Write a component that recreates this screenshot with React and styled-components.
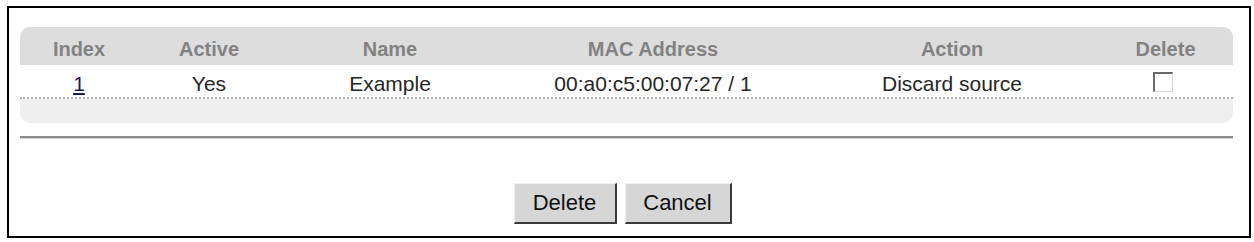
import React from "react";
import styled, { createGlobalStyle } from "styled-components";

const Global = createGlobalStyle`
  html, body { margin: 0; padding: 0; background: #ffffff; }
  body { font-family: "Liberation Sans", Arial, sans-serif; }
`;

const Frame = styled.div`
  box-sizing: border-box;
  margin: 6px 0 0 7px;
  width: 1244px;
  height: 232px;
  border: 2px solid #000;
  padding: 19px 16px 0 11px;
  display: flex;
  flex-direction: column;
`;

const Panel = styled.div`
  background: #efefef;
  border-radius: 10px;
  overflow: hidden;
  padding-bottom: 24px;
`;

const COLS = "118px 142px 220px 306px 292px 1fr";

const HeaderRow = styled.div`
  display: grid;
  grid-template-columns: ${COLS};
  height: 38px;
  align-items: center;
  background: #dddddd;
`;

const HeadCell = styled.div`
  text-align: center;
  font-size: 20px;
  font-weight: bold;
  color: #828282;
  padding-top: 6px;
`;

const DataRow = styled.div`
  display: grid;
  grid-template-columns: ${COLS};
  height: 32px;
  align-items: center;
  background: #ffffff;
  border-bottom: 2px dotted #b4b4b4;
`;

const Cell = styled.div`
  text-align: center;
  font-size: 21px;
  color: #262626;
  padding-top: 5px;
  display: flex;
  justify-content: center;
  align-items: center;
`;

const IndexLink = styled.a`
  color: #1c1c4c;
  text-decoration: underline;
  font-size: 21px;
`;

const Check = styled.input.attrs({ type: "checkbox" })`
  appearance: none;
  -webkit-appearance: none;
  margin: 0;
  width: 20px;
  height: 20px;
  box-sizing: border-box;
  background: #fff;
  border-top: 2px solid #6a6a6a;
  border-left: 2px solid #6a6a6a;
  border-right: 1px solid #d8d8d8;
  border-bottom: 1px solid #d8d8d8;
  margin-top: -4px;
  margin-left: -6px;
`;

const Separator = styled.div`
  margin-top: 13px;
  height: 0;
  border-top: 2px solid #8c8c8c;
  border-bottom: 1px solid #d6d6d6;
`;

const ButtonBar = styled.div`
  display: flex;
  justify-content: center;
  gap: 8px;
  margin-top: 44px;
  padding-right: 8px;
`;

const Button = styled.button`
  box-sizing: border-box;
  height: 41px;
  width: ${(p) => p.$w}px;
  font-family: "Liberation Sans", Arial, sans-serif;
  font-size: 22px;
  color: #111;
  background: #d6d6d6;
  border-top: 1px solid #f2f2f2;
  border-left: 1px solid #f2f2f2;
  border-right: 2px solid #3a3a3a;
  border-bottom: 2px solid #3a3a3a;
  padding: 0;
`;

export default function App() {
  return (
    <>
      <Global />
      <Frame>
        <Panel>
          <HeaderRow>
            <HeadCell>Index</HeadCell>
            <HeadCell>Active</HeadCell>
            <HeadCell>Name</HeadCell>
            <HeadCell>MAC Address</HeadCell>
            <HeadCell>Action</HeadCell>
            <HeadCell>Delete</HeadCell>
          </HeaderRow>
          <DataRow>
            <Cell>
              <IndexLink href="#">1</IndexLink>
            </Cell>
            <Cell>Yes</Cell>
            <Cell>Example</Cell>
            <Cell>00:a0:c5:00:07:27 / 1</Cell>
            <Cell>Discard source</Cell>
            <Cell>
              <Check />
            </Cell>
          </DataRow>
        </Panel>
        <Separator />
        <ButtonBar>
          <Button $w={103}>Delete</Button>
          <Button $w={107}>Cancel</Button>
        </ButtonBar>
      </Frame>
    </>
  );
}
